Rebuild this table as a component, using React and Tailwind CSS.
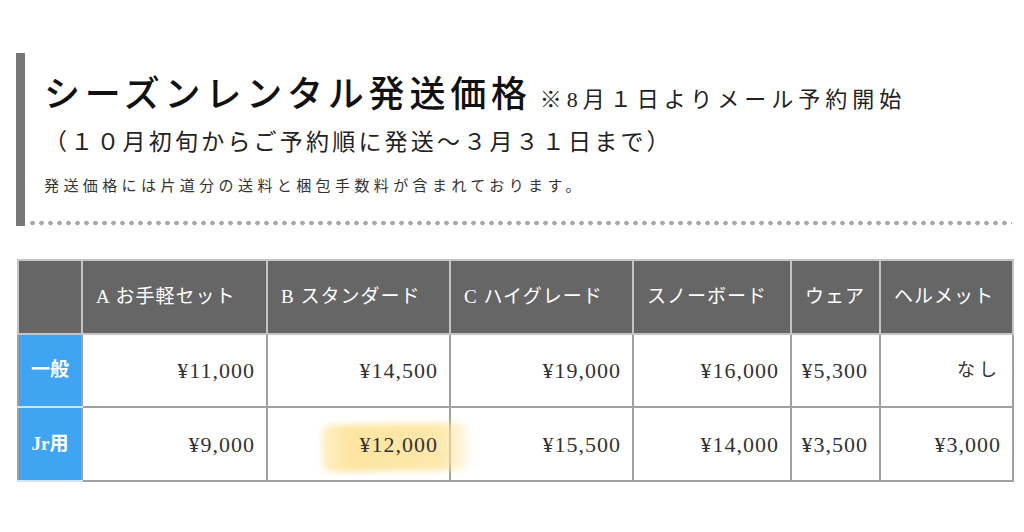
import React from "react";

const FONT = { fontFamily: "'Liberation Serif', 'Noto Sans CJK JP', serif" };

const headers = ["A お手軽セット", "B スタンダード", "C ハイグレード", "スノーボード", "ウェア", "ヘルメット"];
const widths = ["w-[64px]", "w-[185px]", "w-[183px]", "w-[183px]", "w-[158px]", "w-[89px]", "w-[133px]"];
const rows = [
  { label: "一般", values: ["¥11,000", "¥14,500", "¥19,000", "¥16,000", "¥5,300", "なし"] },
  { label: "Jr用", values: ["¥9,000", "¥12,000", "¥15,500", "¥14,000", "¥3,500", "¥3,000"] },
];

export default function App() {
  return (
    <div className="w-[1024px] h-[532px] bg-white text-[#1a1a1a] overflow-hidden" style={FONT}>
      <div className="flex ml-4 mt-[53px] mr-3">
        <div className="w-[9px] bg-[#777777] shrink-0" />
        <div className="flex-1 pt-5">
          <div className="flex items-baseline pl-[19px]">
            <h1 className="text-[36px] leading-[44px] font-medium tracking-[4.8px] text-[#111]">シーズンレンタル発送価格</h1>
            <span className="ml-2 text-[22px] tracking-[5px] text-[#222]">※8月１日よりメール予約開始</span>
          </div>
          <p className="pl-[19px] mt-[11px] text-[23px] leading-[30px] tracking-[3.2px] text-[#222]">（１０月初旬からご予約順に発送〜３月３１日まで）</p>
          <p className="pl-[19px] mt-[18px] text-[15px] leading-[20px] tracking-[4.4px] text-[#333]">発送価格には片道分の送料と梱包手数料が含まれております。</p>
          <div className="mt-[24px] h-[6px] ml-[3px] bg-[radial-gradient(circle,#a8a8a8_2px,transparent_2.6px)] bg-[length:9px_6px]" />
        </div>
      </div>

      <table className="ml-[17px] mt-[33px] border-collapse table-fixed w-[995px]">
        <colgroup>
          {widths.map((w, i) => (
            <col key={i} className={w} />
          ))}
        </colgroup>
        <thead>
          <tr className="h-[74px]">
            <th className="bg-[#666666] border-2 border-[#c4c4c4]" />
            {headers.map((h) => (
              <th key={h} className="bg-[#666666] border-2 border-[#c4c4c4] text-left pl-[13px] text-white text-[19px] font-normal tracking-[1px] whitespace-nowrap">
                {h}
              </th>
            ))}
          </tr>
        </thead>
        <tbody>
          {rows.map((r, ri) => (
            <tr key={r.label} className={ri === 0 ? "h-[73px]" : "h-[74px]"}>
              <td className="bg-[#3fa4f2] border-2 border-[#a0a0a0] border-b-[#cfe6f8] text-white text-center text-[19px] font-bold">
                {r.label}
              </td>
              {r.values.map((v, vi) => (
                <td key={vi} className={"border-2 border-[#a0a0a0] text-right pr-[11px] tracking-[1px] text-[#333] " + (v === "なし" ? "text-[18px] tracking-[4px] pr-[8px]" : "text-[22px]")}>
                  {vi === 1 && ri === 1 ? (
                    <span className="relative inline-block">
                      <span className="absolute left-[-38px] right-[-30px] top-[-4px] bottom-[-10px] rounded-[10px] bg-[linear-gradient(90deg,rgba(253,226,150,0.55),rgba(253,226,150,0.9)_20%,rgba(253,226,150,0.8)_80%,rgba(253,226,150,0.2))] blur-[3px] -rotate-1" />
                      <span className="relative">{v}</span>
                    </span>
                  ) : (
                    v
                  )}
                </td>
              ))}
            </tr>
          ))}
        </tbody>
      </table>
    </div>
  );
}
